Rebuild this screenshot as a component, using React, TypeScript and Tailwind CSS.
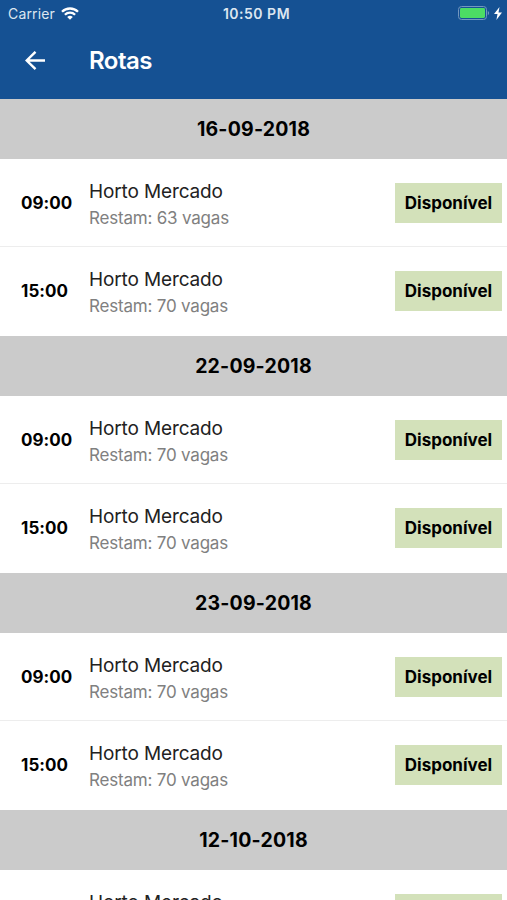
const days = [
  { date: '16-09-2018', seats: [63, 70] },
  { date: '22-09-2018', seats: [70, 70] },
  { date: '23-09-2018', seats: [70, 70] },
  { date: '12-10-2018', seats: [70] },
];

const times = ['09:00', '15:00'];

function StatusBar() {
  return (
    <div className="grid h-7 grid-cols-3 items-center pb-0.5 pl-2 pr-[5px] text-[14px]">
      <div className="flex items-center gap-1.5">
        <span className="tracking-[0.15px] text-[#dce6f0]">Carrier</span>
        <svg width="18" height="13" viewBox="0 0 18 13" fill="none" stroke="white" strokeWidth="2.3">
          <path d="M1 4.8a11.3 11.3 0 0 1 16 0M3.9 7.7a7.2 7.2 0 0 1 10.2 0" />
          <path d="M6.2 10a4 4 0 0 1 5.6 0L9 12.8Z" fill="white" stroke="none" />
        </svg>
      </div>
      <span className="pl-[3px] text-center font-semibold tracking-[0.5px] text-[#dce6f0]">10:50 PM</span>
      <div className="flex items-center justify-end gap-1">
        <svg width="32" height="14" viewBox="0 0 32 14">
          <rect x="0.5" y="0.5" width="28" height="13" rx="3" fill="none" stroke="#7397bf" />
          <rect x="2" y="2" width="25" height="10" rx="1.4" fill="#4cdc64" />
          <path d="M29.8 4.7q2.7 2.3 0 4.6Z" fill="#7397bf" />
        </svg>
        <svg width="8" height="13" viewBox="0 0 8 13" fill="white">
          <path d="M5.5 0 0 7h3.5L2.4 13 8 5.5H4.5Z" />
        </svg>
      </div>
    </div>
  );
}

function Route({ time, seats, last }: { time: string; seats: number; last: boolean }) {
  return (
    <div className={`flex h-[88.5px] items-center pl-[21px] pr-[5px] ${last ? '' : 'shadow-[inset_0_-1px_0_#ededed]'}`}>
      <span className="w-[68px] pt-px text-[17px] font-bold tracking-[0.05px] text-black">{time}</span>
      <div className="flex-1 pt-1">
        <p className="text-[19px] leading-[26px] tracking-[-0.13px] text-[#222]">Horto Mercado</p>
        <p className="text-[17px] leading-[26px] tracking-[-0.2px] text-[#808080]">Restam: {seats} vagas</p>
      </div>
      <span className="flex h-10 w-[107px] items-center justify-center bg-[#d3e1ba] pt-px text-[17px] font-bold text-black">
        Disponível
      </span>
    </div>
  );
}

export default function App() {
  return (
    <div className="h-[900px] overflow-hidden bg-white font-['Inter',sans-serif]">
      <header className="h-[98.5px] bg-[#155193] text-white">
        <StatusBar />
        <div className="flex h-[65px] items-center pl-[25px]">
          <svg width="20" height="20" viewBox="0 0 20 20" fill="none" stroke="white" strokeWidth="2.4">
            <path d="M20 9.5H2M10.5 0.8 1.7 9.5l8.8 8.7" />
          </svg>
          <h1 className="ml-11 text-[24px] font-semibold tracking-[-0.5px]">Rotas</h1>
        </div>
      </header>
      {days.map((day) => (
        <section key={day.date}>
          <h2 className="flex h-[60px] items-center justify-center bg-[#cbcbcb] pt-0.5 text-[19.5px] font-bold tracking-[0.2px] text-black">
            {day.date}
          </h2>
          {day.seats.map((seats, i) => (
            <Route key={times[i]} time={times[i]} seats={seats} last={i === 1} />
          ))}
        </section>
      ))}
    </div>
  );
}
